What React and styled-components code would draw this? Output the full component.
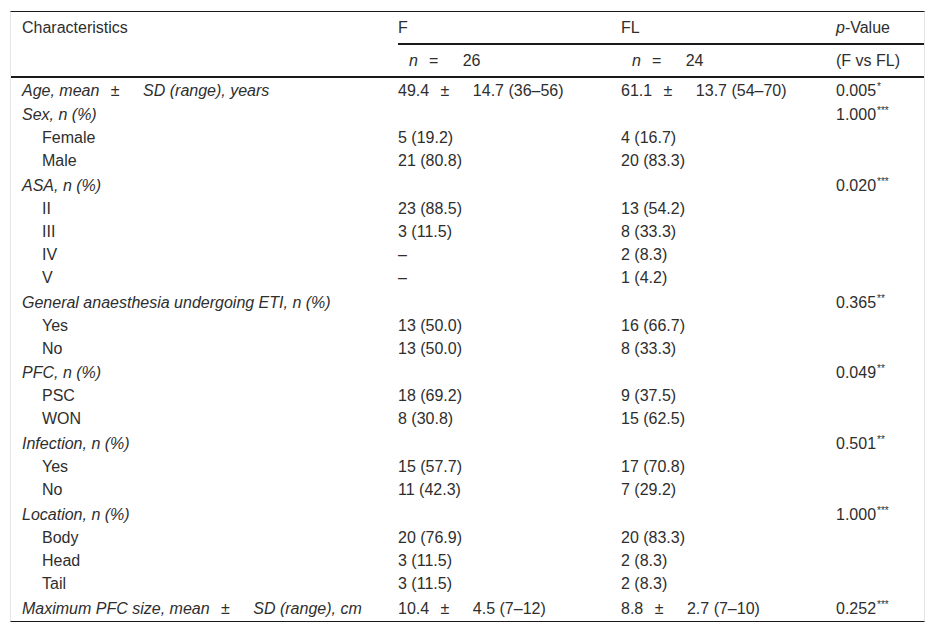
import React from 'react';
import styled, { createGlobalStyle } from 'styled-components';

const GlobalStyle = createGlobalStyle`
  body {
    margin: 0;
    background: #ffffff;
    font-family: "Liberation Sans", Arial, sans-serif;
    color: #2e2e2e;
  }
`;

const rows = [
  { label: 'Age, mean', pm: 'SD (range), years', italic: true, f: ['49.4', '14.7 (36–56)'], fl: ['61.1', '13.7 (54–70)'], p: '0.005', sig: '*' },
  { label: 'Sex, n (%)', italic: true, p: '1.000', sig: '***' },
  { label: 'Female', f: '5 (19.2)', fl: '4 (16.7)' },
  { label: 'Male', f: '21 (80.8)', fl: '20 (83.3)' },
  { label: 'ASA, n (%)', italic: true, p: '0.020', sig: '***' },
  { label: 'II', f: '23 (88.5)', fl: '13 (54.2)' },
  { label: 'III', f: '3 (11.5)', fl: '8 (33.3)' },
  { label: 'IV', f: '–', fl: '2 (8.3)' },
  { label: 'V', f: '–', fl: '1 (4.2)' },
  { label: 'General anaesthesia undergoing ETI, n (%)', italic: true, p: '0.365', sig: '**' },
  { label: 'Yes', f: '13 (50.0)', fl: '16 (66.7)' },
  { label: 'No', f: '13 (50.0)', fl: '8 (33.3)' },
  { label: 'PFC, n (%)', italic: true, p: '0.049', sig: '**' },
  { label: 'PSC', f: '18 (69.2)', fl: '9 (37.5)' },
  { label: 'WON', f: '8 (30.8)', fl: '15 (62.5)' },
  { label: 'Infection, n (%)', italic: true, p: '0.501', sig: '**' },
  { label: 'Yes', f: '15 (57.7)', fl: '17 (70.8)' },
  { label: 'No', f: '11 (42.3)', fl: '7 (29.2)' },
  { label: 'Location, n (%)', italic: true, p: '1.000', sig: '***' },
  { label: 'Body', f: '20 (76.9)', fl: '20 (83.3)' },
  { label: 'Head', f: '3 (11.5)', fl: '2 (8.3)' },
  { label: 'Tail', f: '3 (11.5)', fl: '2 (8.3)' },
  { label: 'Maximum PFC size, mean', pm: 'SD (range), cm', italic: true, f: ['10.4', '4.5 (7–12)'], fl: ['8.8', '2.7 (7–10)'], p: '0.252', sig: '***' },
];

const Pm = ({ a, b }) => (
  <>
    {a} <Plus>±</Plus> {b}
  </>
);

const Value = ({ v }) => (Array.isArray(v) ? <Pm a={v[0]} b={v[1]} /> : v || null);

const App = () => (
  <Page>
    <GlobalStyle />
    <Frame>
      <Head>
        <HeadLabel>Characteristics</HeadLabel>
        <GroupCell>F</GroupCell>
        <GroupCell>FL</GroupCell>
        <GroupCell>
          <i>p</i>-Value
        </GroupCell>
        <SubCell $indent>
          <i>n</i> <Eq>=</Eq> 26
        </SubCell>
        <SubCell $indent>
          <i>n</i> <Eq>=</Eq> 24
        </SubCell>
        <SubCell>(F vs FL)</SubCell>
      </Head>
      <Body>
        {rows.map((r, i) => (
          <Row key={i} $tall={!!r.sig}>
            <Label $italic={r.italic}>
              {r.pm ? <Pm a={r.label} b={r.pm} /> : r.label}
            </Label>
            <Cell>
              <Value v={r.f} />
            </Cell>
            <Cell>
              <Value v={r.fl} />
            </Cell>
            <Cell>
              {r.p}
              {r.sig && <Sup>{r.sig}</Sup>}
            </Cell>
          </Row>
        ))}
      </Body>
    </Frame>
  </Page>
);

const Page = styled.div`
  padding: 11px 0 0 10px;
`;

const Frame = styled.div`
  width: 913px;
  border-left: 1px solid #e6e6e6;
  border-right: 1px solid #e6e6e6;
  border-top: 1px solid #1a1a1a;
  border-bottom: 1px solid #1a1a1a;
  font-size: 16px;
`;

const Head = styled.div`
  display: grid;
  grid-template-columns: 387px 223px 215px 88px;
  grid-template-rows: 33px 31px;
  border-bottom: 2px solid #1a1a1a;
`;

const HeadLabel = styled.div`
  grid-row: 1 / 3;
  padding: 7px 0 0 11px;
  line-height: 18px;
`;

const GroupCell = styled.div`
  display: flex;
  align-items: center;
  border-bottom: 2px solid #1a1a1a;
  line-height: 18px;
`;

const SubCell = styled.div`
  display: flex;
  align-items: center;
  white-space: pre;
  padding-left: ${(p) => (p.$indent ? '11px' : '0')};
  line-height: 18px;
  i {
    margin-right: 4px;
  }
`;

const Eq = styled.span`
  margin: 0 20px 0 7px;
`;

const Body = styled.div`
  display: flex;
  flex-direction: column;
`;

const Row = styled.div`
  display: grid;
  grid-template-columns: 387px 223px 215px 88px;
  height: ${(p) => (p.$tall ? '24.7px' : '23px')};
  align-items: end;
  padding-bottom: 3px;
  box-sizing: border-box;
`;

const Label = styled.div`
  padding-left: ${(p) => (p.$italic ? '11px' : '31px')};
  font-style: ${(p) => (p.$italic ? 'italic' : 'normal')};
  line-height: 19px;
  white-space: nowrap;
`;

const Cell = styled.div`
  line-height: 19px;
  white-space: nowrap;
`;

const Plus = styled.span`
  font-style: normal;
  margin: 0 19px 0 7px;
`;

const Sup = styled.sup`
  font-size: 10px;
  vertical-align: 6px;
  line-height: 0;
  margin-left: 1px;
`;

export default App;
